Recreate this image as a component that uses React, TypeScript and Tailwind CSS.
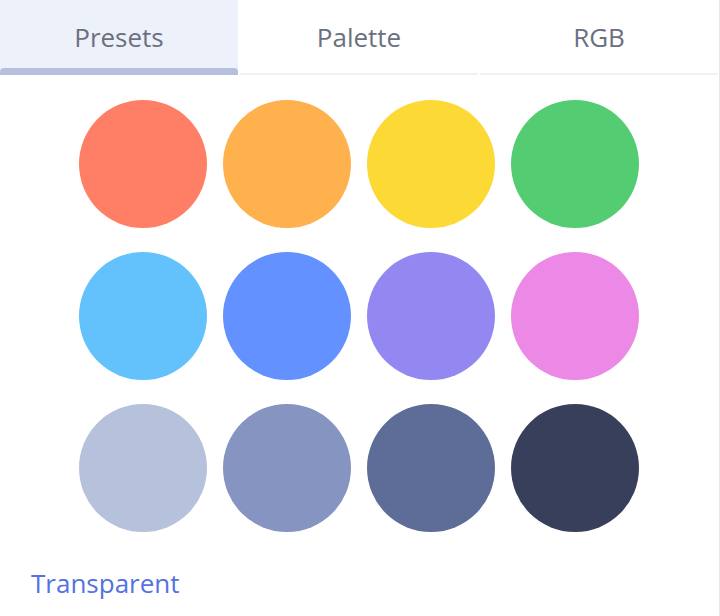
import React, { useState } from 'react';

const PRESETS = [
  '#ff7f66', '#ffb14e', '#fdd935', '#54cc72',
  '#63c2fb', '#6391ff', '#9388f2', '#ec88e6',
  '#b6c1dc', '#8594c0', '#5d6d97', '#373f5b',
];

const TABS = ['Presets', 'Palette', 'RGB'];

export default function App() {
  const [tab, setTab] = useState('Presets');

  return (
    <div className="w-[720px] h-[616px] bg-white border-r border-[#e6e8ee] font-['Open_Sans',sans-serif] overflow-hidden">
      <div className="grid grid-cols-3 gap-[2px] w-[718px]">
        {TABS.map((t) => {
          const active = t === tab;
          return (
            <button
              key={t}
              onClick={() => setTab(t)}
              className={
                active
                  ? 'relative h-[75px] flex items-center justify-center pb-[1px] bg-[#edf1fa] text-[#6b7080] text-[26px] font-medium'
                  : 'relative h-[75px] flex items-center justify-center pb-[1px] bg-white text-[#6b7080] text-[26px] font-medium'
              }
            >
              {t}
              {active ? (
                <span className="absolute left-0 right-0 bottom-0 h-[7px] rounded-t-[4px] bg-[#b6c0dd]" />
              ) : (
                <span className="absolute left-0 right-0 bottom-0 h-[2px] bg-[#eef0f5]" />
              )}
            </button>
          );
        })}
      </div>

      <div className="grid grid-cols-4 gap-x-4 gap-y-6 w-[560px] ml-[79px] mt-[25px]">
        {PRESETS.map((c) => (
          <button
            key={c}
            className="w-[128px] h-[128px] rounded-full"
            style={{ backgroundColor: c }}
          />
        ))}
      </div>

      <button className="ml-[31px] mt-[33px] text-[26px] font-medium text-[#5472e0] leading-[36px]">
        Transparent
      </button>
    </div>
  );
}
